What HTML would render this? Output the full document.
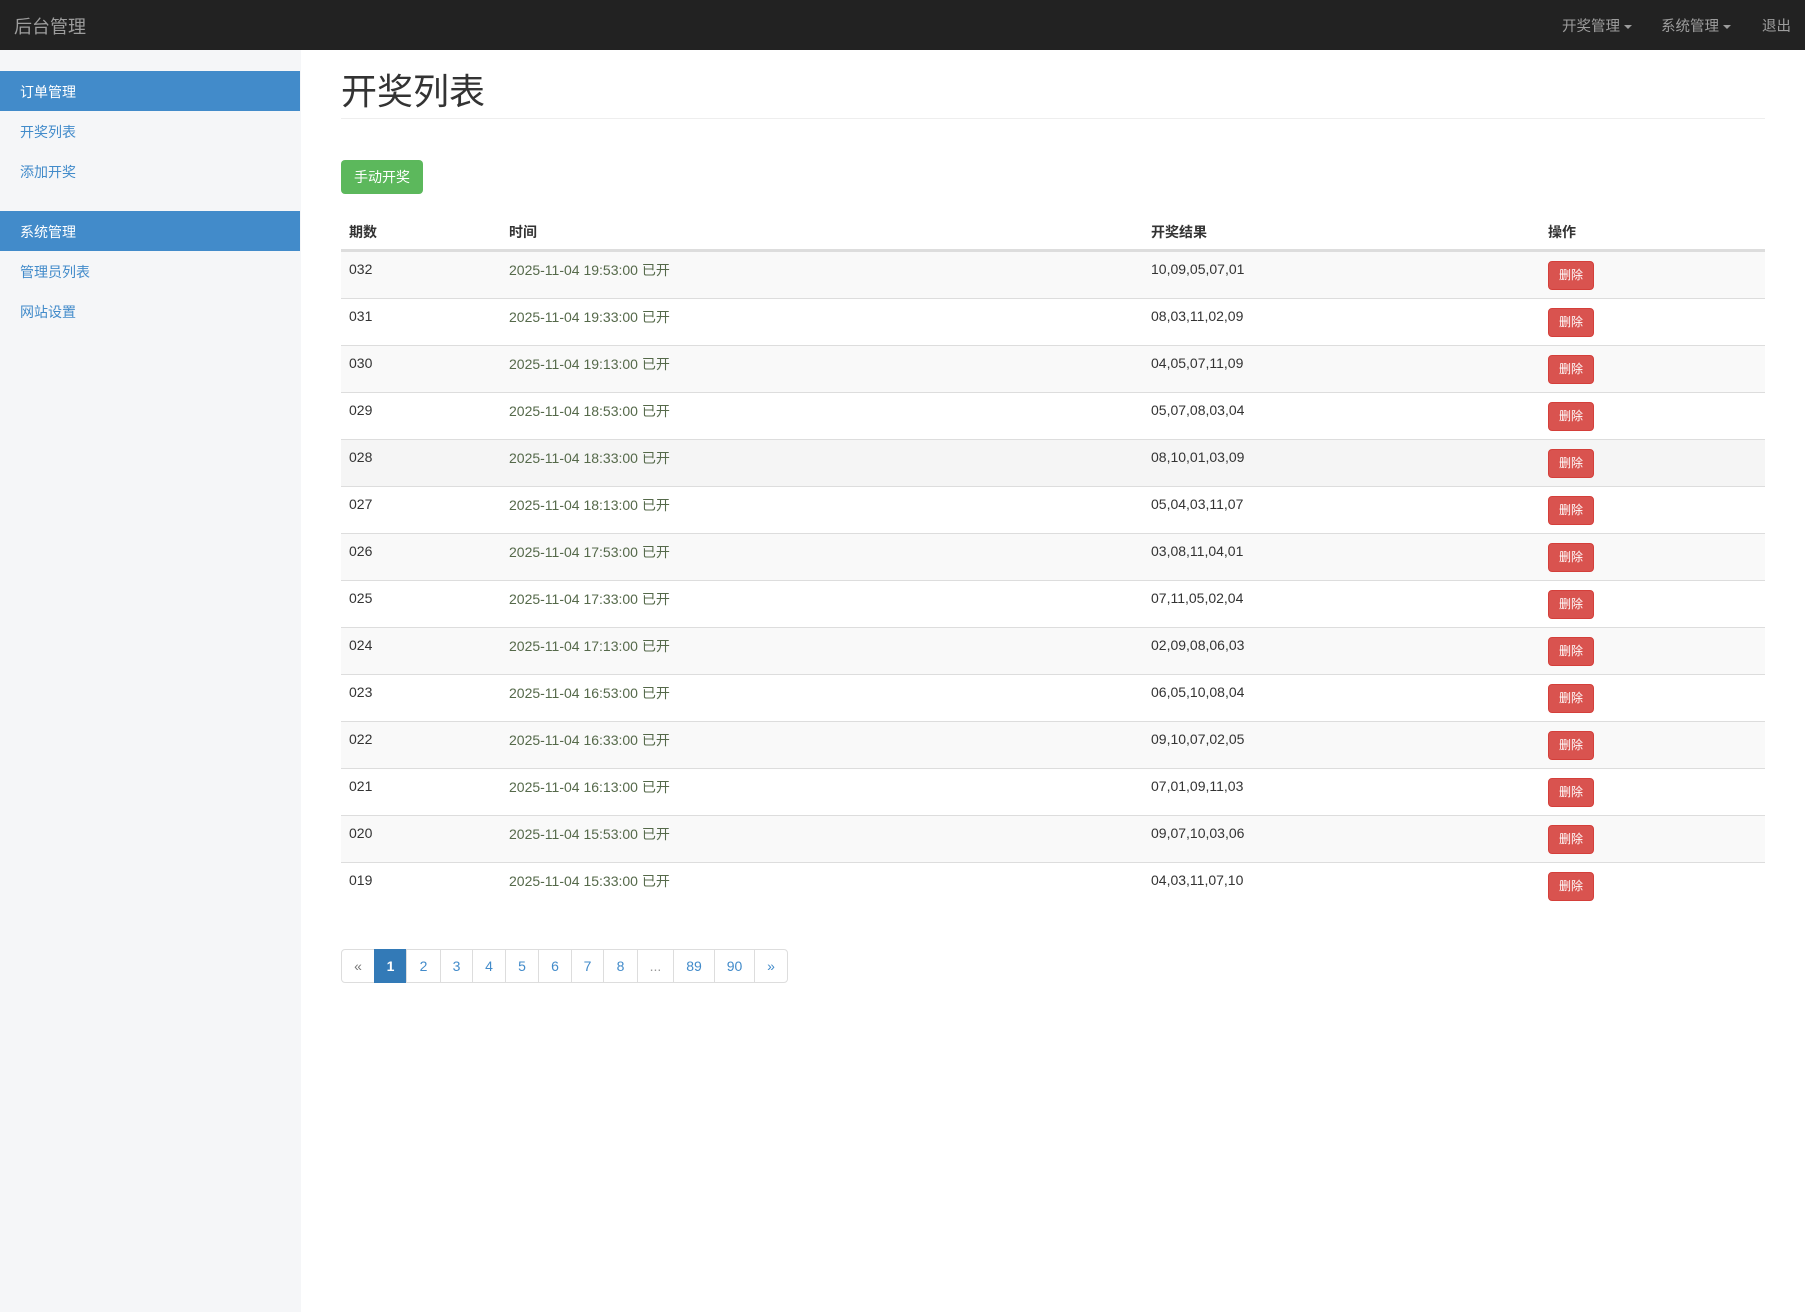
<!DOCTYPE html>
<html><head><meta charset="utf-8"><style>
*{box-sizing:border-box;margin:0;padding:0}
body{width:1805px;height:1312px;background:#fff;font-family:"Liberation Sans","Noto Sans CJK SC",sans-serif;color:#333;position:relative;overflow:hidden;font-size:15px}
.nav{position:absolute;left:0;top:0;width:1805px;height:50px;background:#222}
.nav .brand{position:absolute;left:14px;top:13px;font-size:18px;color:#9d9d9d}
.nav .r{position:absolute;top:15px;font-size:14.5px;color:#9d9d9d}
.caret{display:inline-block;border-top:4px solid #9d9d9d;border-left:4px solid transparent;border-right:4px solid transparent;vertical-align:middle;margin-left:4px}
.side{position:absolute;left:0;top:50px;width:301px;height:1262px;background:#f5f6f8}
.sh{position:absolute;left:0;width:300px;height:40px;background:#428bca;color:#fff;font-size:14px;padding:11px 0 0 20px}
.si{position:absolute;left:20px;font-size:14px;color:#428bca}
h1{position:absolute;left:341px;top:63px;font-size:36px;font-weight:normal;color:#333}
.hr{position:absolute;left:341px;top:118px;width:1424px;height:1px;background:#eee}
.btn{position:absolute;left:341px;top:160px;width:82px;height:34px;background:#5cb85c;border-radius:4px;color:#fff;font-size:14px;text-align:center;line-height:34px}
.th{position:absolute;top:222px;font-weight:bold;font-size:14px}
.thb{position:absolute;left:341px;top:249px;width:1424px;height:3px;background:#ddd}
.row{position:absolute;left:341px;width:1424px;height:47px;border-bottom:1px solid #ddd}
.row span{position:absolute;top:9px;font-size:14px}
.row .t{color:#55694a;top:8px}
.del{position:absolute;left:1207px;top:9px;width:46px;height:29px;background:#d9534f;border:1px solid #d43f3a;border-radius:4px;color:#fff;font-size:12px;text-align:center;line-height:27px}
.pg{position:absolute;top:949px;height:34px;border:1px solid #ddd;color:#428bca;font-size:14px;text-align:center;line-height:32px}
</style></head><body>
<div class="nav"><div class="brand">后台管理</div>
<div class="r" style="left:1562px">开奖管理<span class="caret"></span></div>
<div class="r" style="left:1661px">系统管理<span class="caret"></span></div>
<div class="r" style="left:1762px">退出</div></div>
<div class="side">
<div class="sh" style="top:21px">订单管理</div>
<div class="si" style="top:72px">开奖列表</div>
<div class="si" style="top:112px">添加开奖</div>
<div class="sh" style="top:161px">系统管理</div>
<div class="si" style="top:212px">管理员列表</div>
<div class="si" style="top:252px">网站设置</div>
</div>
<h1>开奖列表</h1><div class="hr"></div>
<div class="btn">手动开奖</div>
<div class="th" style="left:349px">期数</div>
<div class="th" style="left:509px">时间</div>
<div class="th" style="left:1151px">开奖结果</div>
<div class="th" style="left:1548px">操作</div>
<div class="thb"></div>
<div class="row" style="top:252px;background:#f9f9f9"><span style="left:8px">032</span><span class="t" style="left:168px">2025-11-04 19:53:00 已开</span><span style="left:810px">10,09,05,07,01</span><div class="del">删除</div></div>
<div class="row" style="top:299px"><span style="left:8px">031</span><span class="t" style="left:168px">2025-11-04 19:33:00 已开</span><span style="left:810px">08,03,11,02,09</span><div class="del">删除</div></div>
<div class="row" style="top:346px;background:#f9f9f9"><span style="left:8px">030</span><span class="t" style="left:168px">2025-11-04 19:13:00 已开</span><span style="left:810px">04,05,07,11,09</span><div class="del">删除</div></div>
<div class="row" style="top:393px"><span style="left:8px">029</span><span class="t" style="left:168px">2025-11-04 18:53:00 已开</span><span style="left:810px">05,07,08,03,04</span><div class="del">删除</div></div>
<div class="row" style="top:440px;background:#f5f5f5"><span style="left:8px">028</span><span class="t" style="left:168px">2025-11-04 18:33:00 已开</span><span style="left:810px">08,10,01,03,09</span><div class="del">删除</div></div>
<div class="row" style="top:487px"><span style="left:8px">027</span><span class="t" style="left:168px">2025-11-04 18:13:00 已开</span><span style="left:810px">05,04,03,11,07</span><div class="del">删除</div></div>
<div class="row" style="top:534px;background:#f9f9f9"><span style="left:8px">026</span><span class="t" style="left:168px">2025-11-04 17:53:00 已开</span><span style="left:810px">03,08,11,04,01</span><div class="del">删除</div></div>
<div class="row" style="top:581px"><span style="left:8px">025</span><span class="t" style="left:168px">2025-11-04 17:33:00 已开</span><span style="left:810px">07,11,05,02,04</span><div class="del">删除</div></div>
<div class="row" style="top:628px;background:#f9f9f9"><span style="left:8px">024</span><span class="t" style="left:168px">2025-11-04 17:13:00 已开</span><span style="left:810px">02,09,08,06,03</span><div class="del">删除</div></div>
<div class="row" style="top:675px"><span style="left:8px">023</span><span class="t" style="left:168px">2025-11-04 16:53:00 已开</span><span style="left:810px">06,05,10,08,04</span><div class="del">删除</div></div>
<div class="row" style="top:722px;background:#f9f9f9"><span style="left:8px">022</span><span class="t" style="left:168px">2025-11-04 16:33:00 已开</span><span style="left:810px">09,10,07,02,05</span><div class="del">删除</div></div>
<div class="row" style="top:769px"><span style="left:8px">021</span><span class="t" style="left:168px">2025-11-04 16:13:00 已开</span><span style="left:810px">07,01,09,11,03</span><div class="del">删除</div></div>
<div class="row" style="top:816px;background:#f9f9f9"><span style="left:8px">020</span><span class="t" style="left:168px">2025-11-04 15:53:00 已开</span><span style="left:810px">09,07,10,03,06</span><div class="del">删除</div></div>
<div class="row" style="top:863px;border-bottom:none"><span style="left:8px">019</span><span class="t" style="left:168px">2025-11-04 15:33:00 已开</span><span style="left:810px">04,03,11,07,10</span><div class="del">删除</div></div>
<div class="pg" style="left:341px;width:34px;border-radius:4px 0 0 4px;color:#777">«</div>
<div class="pg" style="left:374px;width:33px;background:#337ab7;border-color:#337ab7;color:#fff;font-weight:bold">1</div>
<div class="pg" style="left:406px;width:35px">2</div>
<div class="pg" style="left:440px;width:33px">3</div>
<div class="pg" style="left:472px;width:34px">4</div>
<div class="pg" style="left:505px;width:34px">5</div>
<div class="pg" style="left:538px;width:34px">6</div>
<div class="pg" style="left:571px;width:33px">7</div>
<div class="pg" style="left:603px;width:35px">8</div>
<div class="pg" style="left:637px;width:37px;color:#999">...</div>
<div class="pg" style="left:673px;width:42px">89</div>
<div class="pg" style="left:714px;width:41px">90</div>
<div class="pg" style="left:754px;width:34px;border-radius:0 4px 4px 0">»</div>
</body></html>
